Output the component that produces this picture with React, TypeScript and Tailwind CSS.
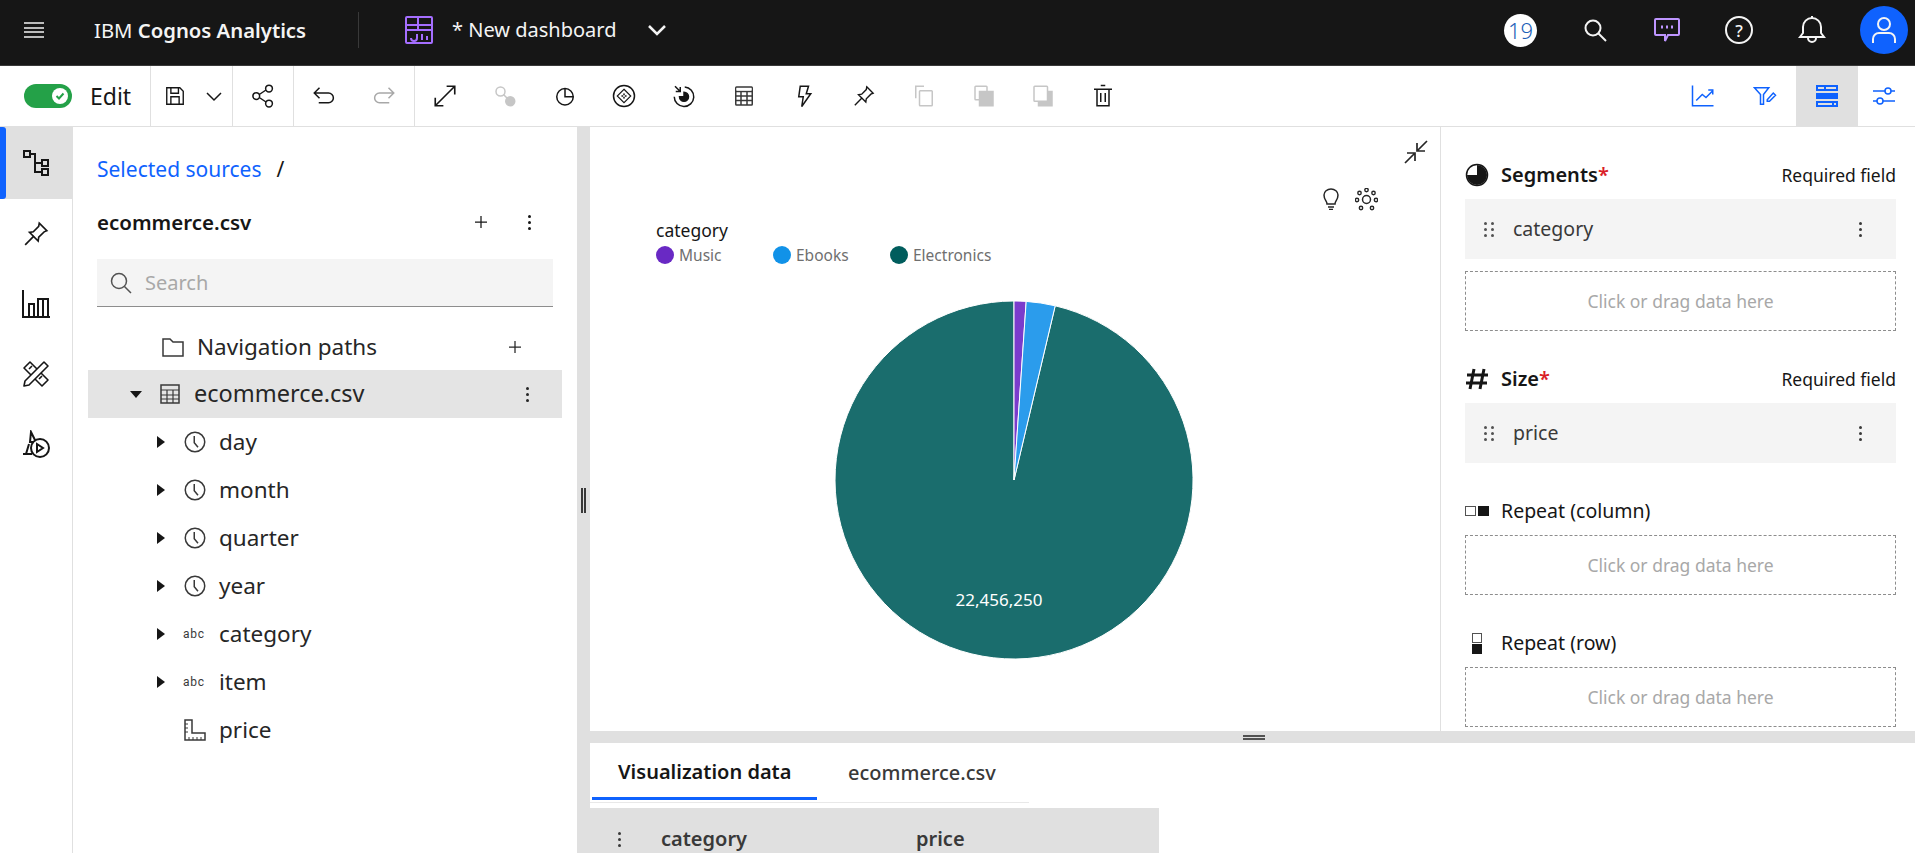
import React from 'react';

type IconProps = { size?: number; className?: string; children?: React.ReactNode; box?: number };

const Ico: React.FC<IconProps> = ({ size = 24, className = '', children, box = 32 }) => (
    <svg
        width={size}
        height={size}
        viewBox={`0 0 ${box} ${box}`}
        fill="none"
        stroke="currentColor"
        strokeWidth={2}
        className={`shrink-0 ${className}`}
    >
        {children}
    </svg>
);

const Dots: React.FC<{ className?: string }> = ({ className = '' }) => (
    <span className={`flex flex-col gap-[3px] w-[3px] ${className}`}>
        <i className="block w-[3px] h-[3px] rounded-full bg-current" />
        <i className="block w-[3px] h-[3px] rounded-full bg-current" />
        <i className="block w-[3px] h-[3px] rounded-full bg-current" />
    </span>
);

const Plus = () => (
    <Ico size={16}>
        <path d="M16 4v24M4 16h24" strokeWidth={2.5} />
    </Ico>
);

const Grip = () => (
    <span className="grid grid-cols-2 gap-x-[4px] gap-y-[3px] w-[10px]">
        {[0, 1, 2, 3, 4, 5].map((i) => (
            <i key={i} className="block w-[3px] h-[3px] bg-[#525252] rounded-full" />
        ))}
    </span>
);

const Clock = () => (
    <Ico size={24} className="text-[#393939]">
        <circle cx="16" cy="16" r="13" />
        <path d="M15 8v9l5 6" />
    </Ico>
);

const Abc = () => (
    <span className="w-[24px] text-[12px] leading-none text-[#393939] font-['Roboto'] tracking-[0.8px]">abc</span>
);

const Ruler = () => (
    <Ico size={24} className="text-[#393939]" box={24}>
        <path d="M2 2h7v13h13v7H2z" strokeWidth={1.5} />
        <path d="M2 6h3M2 10h3M2 14h3M6 22v-3M10 22v-3M14 22v-3M18 22v-3" strokeWidth={1} />
    </Ico>
);

const Pin: React.FC<{ size?: number }> = ({ size = 22 }) => (
    <Ico size={size} box={24}>
        <path d="M15 2l7 7-2.5 1-5 5 -.5 3.5L6 10.500l3.500-.5 5-5z" strokeWidth={1.5} />
        <path d="M10 14l-8 8" strokeWidth={1.5} />
    </Ico>
);

const toolbarIcons: React.ReactNode[] = [
    <Ico key="expand" size={26}>
        <path d="M4 28L28 4M18 4h10v10M14 28H4V18" />
    </Ico>,
    <Ico key="node" size={24} className="text-[#c6c6c6]">
        <circle cx="10" cy="10" r="6" />
        <path d="M14 14l6 6" />
        <circle cx="23" cy="23" r="6" fill="currentColor" />
    </Ico>,
    <Ico key="pie" size={24}>
        <circle cx="16" cy="17" r="11" />
        <path d="M16 6v11h11" />
    </Ico>,
    <Ico key="insight" size={24}>
        <circle cx="16" cy="16" r="14" />
        <path d="M16 7l9 9-9 9-9-9z" strokeWidth={1.5} />
        <path d="M16 12.500l1 2.500 2.500 1-2.500 1-1 2.500-1-2.500-2.500-1 2.500-1z" strokeWidth={1} />
    </Ico>,
    <Ico key="target" size={24}>
        <path d="M17 4a13 13 0 1 1-14 13" />
        <path d="M16 11a6 6 0 1 1-6 6h6z" fill="currentColor" />
        <path d="M4 3l7 7M11 4v6H5" />
    </Ico>,
    <Ico key="table" size={24} className="text-[#393939]">
        <rect x="5" y="4" width="22" height="24" rx="1" />
        <path d="M5 10h22M5 16h22M5 22h22M12 10v18M20 10v18" />
        <path d="M6 7h20" strokeWidth={3} stroke="#fff" />
    </Ico>,
    <Ico key="bolt" size={24}>
        <path d="M11 3h11l-3 10h6L13 30l2-13H9z" />
    </Ico>,
    <Pin key="pin" size={22} />,
    <Ico key="copy1" size={24} className="text-[#c6c6c6]">
        <path d="M5 19V3h11" />
        <rect x="10" y="9" width="17" height="20" rx="1" />
    </Ico>,
    <Ico key="copy2" size={24} className="text-[#c6c6c6]">
        <rect x="4" y="3" width="16" height="18" rx="1" />
        <rect x="10" y="10" width="18" height="19" fill="currentColor" />
    </Ico>,
    <Ico key="copy3" size={24} className="text-[#c6c6c6]">
        <rect x="10" y="10" width="18" height="19" fill="currentColor" />
        <rect x="4" y="3" width="18" height="20" fill="#fff" rx="1" />
    </Ico>,
    <Ico key="trash" size={24}>
        <path d="M4 7h24M13 2h6M8 7v22h16V7M13 12v12M19 12v12" />
    </Ico>,
];

const TreeRow: React.FC<{ label: string; icon: React.ReactNode; caret?: boolean }> = ({ label, icon, caret = true }) => (
    <div className="h-[48px] flex items-center pl-[84px] text-[22.5px]">
        <span className="w-[26px]">
            {caret && <i className="block w-0 h-0 border-y-[6px] border-y-transparent border-l-[8px] border-l-[#161616]" />}
        </span>
        <span className="w-[36px] flex">{icon}</span>
        <span>{label}</span>
    </div>
);

const DropZone = () => (
    <div className="h-[60px] border border-dashed border-[#8d8d8d] flex items-center justify-center text-[17.5px] text-[#a8a8a8]">
        Click or drag data here
    </div>
);

const FieldPill: React.FC<{ label: string }> = ({ label }) => (
    <div className="h-[60px] bg-[#f4f4f4] flex items-center pl-[19px] pr-[34px] text-[#393939]">
        <Grip />
        <span className="ml-[19px] flex-1 text-[19.5px]">{label}</span>
        <Dots />
    </div>
);

const App: React.FC = () => {
    return (
        <div className="w-[1915px] h-[853px] overflow-hidden flex flex-col bg-white text-[20px] text-[#161616] font-['Noto_Sans','Liberation_Sans',sans-serif]">
            {/* top bar */}
            <header className="h-[66px] shrink-0 bg-[#161616] border-b border-[#393939] flex items-center pb-[5px] text-[#f4f4f4]">
                <Ico size={20} className="ml-[24px]" box={20}>
                    <path d="M0 3h20M0 8h20M0 12h20M0 17h20" strokeWidth={1.5} />
                </Ico>
                <span className="ml-[50px] w-[264px] text-[20.3px]">
                    IBM <b className="font-semibold">Cognos Analytics</b>
                </span>
                <span className="w-px h-[36px] bg-[#393939]" />
                <Ico size={28} className="ml-[46px] text-[#a56eff]" box={28}>
                    <rect x="1" y="1" width="26" height="26" rx="1" />
                    <path d="M1 9h26M1 14h26M13 1v13" />
                    <path d="M12 18v4a3 3 0 0 1-6 0M17 18v6M22 20v4" />
                </Ico>
                <span className="ml-[19px]">* New dashboard</span>
                <Ico size={20} className="ml-[31px]" box={20}>
                    <path d="M2 6l8 8 8-8" strokeWidth={2.5} />
                </Ico>
                <span className="ml-auto w-[33px] h-[33px] rounded-full bg-white text-[#1c5fb8] flex items-center justify-center text-[22px] font-light">
                    19
                </span>
                <Ico size={24} className="ml-[46px]" box={24}>
                    <circle cx="10" cy="10" r="7.500" />
                    <path d="M15.500 15.500L23 23" />
                </Ico>
                <Ico size={28} className="ml-[46px] text-[#be95ff]" box={28}>
                    <path d="M3 3h22a1 1 0 0 1 1 1v14a1 1 0 0 1-1 1H15l-3 6v-6H3a1 1 0 0 1-1-1V4a1 1 0 0 1 1-1z" />
                    <path d="M8 11h2M13 11h2M18 11h2" strokeWidth={3} />
                </Ico>
                <span className="ml-[44px] w-[28px] h-[28px] rounded-full border-2 border-[#f4f4f4] flex items-center justify-center text-[17px] font-medium leading-none">
                    ?
                </span>
                <Ico size={28} className="ml-[45px]" box={28}>
                    <path d="M2 21l3-4v-6a9 9 0 0 1 18 0v6l3 4z" />
                    <path d="M14 2V0M10 22a4 4 0 0 0 8 0" />
                </Ico>
                <span className="ml-[34px] mr-[7px] w-[48px] h-[48px] rounded-full bg-[#0f62fe] flex items-center justify-center">
                    <Ico size={28} box={28}>
                        <circle cx="14" cy="8" r="6" />
                        <path d="M3 27v-4a6 6 0 0 1 6-6h10a6 6 0 0 1 6 6v4" />
                    </Ico>
                </span>
            </header>

            {/* toolbar */}
            <div className="h-[61px] shrink-0 border-b border-[#e0e0e0] flex items-stretch">
                <div className="w-[151px] border-r border-[#e0e0e0] flex items-center pl-[24px]">
                    <span className="w-[48px] h-[24px] rounded-full bg-[#24a148] flex items-center justify-end pr-[4px]">
                        <span className="w-[16px] h-[16px] rounded-full bg-white flex items-center justify-center text-[#24a148]">
                            <Ico size={12} box={12}>
                                <path d="M2.500 6l2.500 2.500 4.500-5" strokeWidth={2} />
                            </Ico>
                        </span>
                    </span>
                    <span className="ml-[18px] text-[23px]">Edit</span>
                </div>
                <div className="w-[82px] border-r border-[#e0e0e0] flex items-center pl-[13px]">
                    <Ico size={22}>
                        <path d="M4 4h19l5 5v19H4z" />
                        <path d="M10 4v8h11V4M10 28V17h12v11" />
                    </Ico>
                    <Ico size={16} className="ml-[20px]" box={16}>
                        <path d="M1 5l7 7 7-7" strokeWidth={1.5} />
                    </Ico>
                </div>
                <div className="w-[61px] border-r border-[#e0e0e0] flex items-center justify-center">
                    <Ico size={24}>
                        <circle cx="7" cy="16" r="4.500" />
                        <circle cx="24" cy="6" r="4.500" />
                        <circle cx="24" cy="26" r="4.500" />
                        <path d="M11 14l9-6M11 18l9 6" />
                    </Ico>
                </div>
                <div className="w-[121px] border-r border-[#e0e0e0] flex items-center justify-center gap-[36px]">
                    <Ico size={24}>
                        <path d="M10 5L3 12l7 7M3 12h19a6 6 0 0 1 0 13H9" />
                    </Ico>
                    <Ico size={24} className="text-[#a8a8a8]">
                        <path d="M22 5l7 7-7 7M29 12H10a6 6 0 0 0 0 13h13" />
                    </Ico>
                </div>
                <div className="flex items-center">
                    {toolbarIcons.map((icon, i) => (
                        <span key={i} className="w-[59.850px] flex justify-center">
                            {icon}
                        </span>
                    ))}
                </div>
                <div className="ml-auto flex items-stretch text-[#0f62fe]">
                    <span className="w-[62px] flex items-center justify-center">
                        <Ico size={24}>
                            <path d="M2 2v27h28M7 22l8-8 5 4 9-9M23 8h6v6" />
                        </Ico>
                    </span>
                    <span className="w-[62px] flex items-center justify-center">
                        <Ico size={24}>
                            <path d="M2 5h19l-7 9v13h-4V14zM19 21l8-9 3 3-8 8h-3z" />
                        </Ico>
                    </span>
                    <span className="w-[62px] bg-[#e0e0e0] flex items-center justify-center">
                        <svg width="24" height="24" viewBox="0 0 24 24" fill="currentColor">
                            <path d="M1 1h22v6H1zM1 9h22v6H1zM1 17h22v6H1z" />
                            <path d="M3 3h6v2H3zM11 3h10v2H11zM3 19h14v2H3zM19 19h2v2h-2z" fill="#e0e0e0" />
                        </svg>
                    </span>
                    <span className="w-[57px] pr-[5px] flex items-center justify-center">
                        <Ico size={24} box={24}>
                            <path d="M1 7h12M19 7h4M1 17h4M11 17h12" strokeWidth={1.500} />
                            <circle cx="16" cy="7" r="3" strokeWidth={1.500} />
                            <circle cx="8" cy="17" r="3" strokeWidth={1.500} />
                        </Ico>
                    </span>
                </div>
            </div>

            <div className="flex-1 flex min-h-0">
                {/* rail */}
                <nav className="w-[73px] shrink-0 border-r border-[#e0e0e0] flex flex-col text-[#161616]">
                    <div className="h-[72px] bg-[#e0e0e0] relative flex items-center justify-center">
                        <span className="absolute left-0 top-0 bottom-0 w-[6px] rounded-r-[3px] bg-[#0f62fe]" />
                        <Ico size={28} box={28}>
                            <rect x="2" y="2" width="6" height="6" />
                            <rect x="20" y="11" width="6" height="6" />
                            <rect x="20" y="20" width="6" height="6" />
                            <path d="M8 5h5v18h7M13 14h7" />
                        </Ico>
                    </div>
                    <div className="h-[70px] flex items-center justify-center">
                        <Pin size={26} />
                    </div>
                    <div className="h-[70px] flex items-center justify-center">
                        <Ico size={28} box={28}>
                            <path d="M1 0v27h27M7 27V14h5v13M16 27V9h5v18" />
                            <path d="M21 9h5v18" />
                        </Ico>
                    </div>
                    <div className="h-[70px] flex items-center justify-center">
                        <Ico size={28} box={28}>
                            <path d="M8 2L2 8l18 18 6-6zM7 9l3-3M12 14l3-3M17 19l3-3" strokeLinejoin="round" strokeWidth={1.6} />
                            <path d="M22 2l4 4L7 25l-5 1 1-5z" fill="#fff" strokeLinejoin="round" strokeWidth={1.6} />
                        </Ico>
                    </div>
                    <div className="h-[70px] flex items-center justify-center">
                        <Ico size={28} box={28}>
                            <path d="M9 2l5 10h-6zM1 24h9M7 14l-3 10" />
                            <circle cx="18" cy="18" r="9" fill="#fff" />
                            <path d="M15 14l6 4-6 4z" />
                        </Ico>
                    </div>
                </nav>

                {/* data panel */}
                <aside className="w-[504px] shrink-0 flex flex-col">
                    <div className="h-[86px] pl-[24px] flex items-center text-[21px]">
                        <span className="text-[#0f62fe]">Selected sources</span>
                        <span className="ml-[15px]">/</span>
                    </div>
                    <div className="h-[18px] pl-[24px] flex items-center font-semibold text-[20.5px]">
                        <span>ecommerce.csv</span>
                        <span className="ml-auto mr-[39px] flex">
                            <Plus />
                        </span>
                        <Dots className="mr-[46px]" />
                    </div>
                    <div className="mt-[28px] ml-[24px] w-[456px] h-[48px] bg-[#f4f4f4] border-b border-[#8d8d8d] flex items-center pl-[12px] text-[#a8a8a8]">
                        <Ico size={24} className="text-[#525252]" box={24}>
                            <circle cx="10" cy="10" r="7.500" strokeWidth={1.500} />
                            <path d="M15.500 15.500L22 22" strokeWidth={1.500} />
                        </Ico>
                        <span className="ml-[12px]">Search</span>
                    </div>
                    <div className="h-[16px]" />
                    <div className="h-[47px] flex items-center pl-[88px] text-[#262626] text-[22.5px]">
                        <Ico size={24} box={24} className="text-[#393939]">
                            <path d="M2 4h7l3 3h10v14H2z" strokeWidth={1.500} />
                        </Ico>
                        <span className="ml-[12px]">Navigation paths</span>
                        <span className="ml-auto mr-[54px] flex">
                            <Plus />
                        </span>
                    </div>
                    <div className="ml-[15px] w-[474px] h-[48px] bg-[#e4e4e4] flex items-center pl-[42px] pr-[33px] text-[#262626] text-[23.5px]">
                        <i className="w-0 h-0 border-x-[6px] border-x-transparent border-t-[7px] border-t-[#161616]" />
                        <Ico size={24} className="ml-[16px] text-[#393939]" box={24}>
                            <rect x="3" y="3" width="18" height="18" strokeWidth={1.500} />
                            <path d="M3 8h18M3 13h18M3 17h18M9 8v13M15 8v13" strokeWidth={1.200} />
                        </Ico>
                        <span className="ml-[12px] flex-1">ecommerce.csv</span>
                        <Dots />
                    </div>
                    <div className="text-[#262626]">
                        <TreeRow label="day" icon={<Clock />} />
                        <TreeRow label="month" icon={<Clock />} />
                        <TreeRow label="quarter" icon={<Clock />} />
                        <TreeRow label="year" icon={<Clock />} />
                        <TreeRow label="category" icon={<Abc />} />
                        <TreeRow label="item" icon={<Abc />} />
                        <TreeRow label="price" icon={<Ruler />} caret={false} />
                    </div>
                </aside>

                {/* vertical splitter */}
                <div className="w-[13px] shrink-0 bg-[#e0e0e0] pt-[361px] flex justify-center gap-[1px]">
                    <i className="block w-[2px] h-[25px] bg-[#393939]" />
                    <i className="block w-[2px] h-[25px] bg-[#393939]" />
                </div>

                <div className="flex-1 flex flex-col min-w-0">
                    <div className="h-[604px] shrink-0 flex">
                        {/* chart canvas */}
                        <section className="w-[851px] shrink-0 border-r border-[#e0e0e0] pt-[13px] overflow-hidden">
                            <div className="flex justify-end pr-[12px] text-[#262626]">
                                <Ico size={24} box={24}>
                                    <path d="M1 23L10 14M3 13h8v8M23 1l-9 9M13 3v8h8" strokeWidth={1.700} />
                                </Ico>
                            </div>
                            <div className="mt-[24px] flex justify-end pr-[62px] gap-[13px] text-[#262626]">
                                <Ico size={22} box={22}>
                                    <path d="M7 16c0-3-3-4-3-9a7 6 0 0 1 14 0c0 5-3 6-3 9z" strokeWidth={1.500} />
                                    <path d="M8 19h6M9 21.500h4" strokeWidth={1.500} />
                                </Ico>
                                <Ico size={23} box={23}>
                                    <circle cx="11.500" cy="11.500" r="4" strokeWidth={1.500} />
                                    {[[11.500, 2], [4.500, 5], [18.500, 5], [2, 12], [21, 12], [6, 20], [17, 20]].map(([cx, cy]) => (
                                        <circle key={`${cx}-${cy}`} cx={cx} cy={cy} r="1.700" strokeWidth={1.400} />
                                    ))}
                                </Ico>
                            </div>
                            <div className="mt-[8px] ml-[66px] text-[17.500px] leading-[22px]">category</div>
                            <div className="mt-[3px] ml-[66px] flex text-[15.500px] leading-[22px] text-[#6f6f6f]">
                                <span className="w-[117px] flex items-center gap-[5px]">
                                    <i className="block w-[18px] h-[18px] rounded-full bg-[#6929c4]" />
                                    Music
                                </span>
                                <span className="w-[117px] flex items-center gap-[5px]">
                                    <i className="block w-[18px] h-[18px] rounded-full bg-[#1192e8]" />
                                    Ebooks
                                </span>
                                <span className="flex items-center gap-[5px]">
                                    <i className="block w-[18px] h-[18px] rounded-full bg-[#005d5d]" />
                                    Electronics
                                </span>
                            </div>
                            <svg width="360" height="360" viewBox="0 0 360 360" className="mt-[34px] ml-[244px]">
                                <path d="M180 180L221.200 5.800A179 179 0 1 1 180 1Z" fill="#1a6d6d" stroke="#fff" />
                                <path d="M180 180L180 1A179 179 0 0 1 192.200 1.400Z" fill="#7a3ccc" stroke="#fff" />
                                <path d="M180 180L192.200 1.400A179 179 0 0 1 221.200 5.800Z" fill="#2b9cec" stroke="#fff" />
                                <text x="165" y="306" textAnchor="middle" fill="#fff" fontSize="17">
                                    22,456,250
                                </text>
                            </svg>
                        </section>

                        {/* slots panel */}
                        <section className="flex-1 flex flex-col h-[601px] overflow-hidden pl-[24px] pr-[19px] pt-[36px]">
                            <div className="h-[24px] flex items-center">
                                <svg width="24" height="24" viewBox="0 0 24 24" className="shrink-0">
                                    <circle cx="12" cy="12" r="10.500" fill="#fff" stroke="#161616" strokeWidth="1.500" />
                                    <path d="M12 2a10 10 0 1 1-10 10h10z" fill="#161616" />
                                </svg>
                                <b className="ml-[12px] font-semibold">
                                    Segments<span className="text-[#da1e28]">*</span>
                                </b>
                                <span className="ml-auto text-[17.500px]">Required field</span>
                            </div>
                            <div className="mt-[12px]">
                                <FieldPill label="category" />
                            </div>
                            <div className="mt-[12px]">
                                <DropZone />
                            </div>
                            <div className="mt-[36px] h-[24px] flex items-center">
                                <Ico size={24} box={24}>
                                    <path d="M9 2L5 22M19 2l-4 20M2 8h21M1 16h21" strokeWidth={3} />
                                </Ico>
                                <b className="ml-[12px] font-semibold">
                                    Size<span className="text-[#da1e28]">*</span>
                                </b>
                                <span className="ml-auto text-[17.500px]">Required field</span>
                            </div>
                            <div className="mt-[12px]">
                                <FieldPill label="price" />
                            </div>
                            <div className="mt-[36px] h-[24px] flex items-center">
                                <span className="w-[24px] flex items-center gap-[2px]">
                                    <i className="block w-[11px] h-[10px] border border-[#525252]" />
                                    <i className="block w-[11px] h-[10px] bg-[#161616]" />
                                </span>
                                <span className="ml-[12px] text-[19.500px]">Repeat (column)</span>
                            </div>
                            <div className="mt-[12px]">
                                <DropZone />
                            </div>
                            <div className="mt-[36px] h-[24px] flex items-center">
                                <span className="w-[24px] flex flex-col items-center gap-[1px]">
                                    <i className="block w-[10px] h-[10px] border border-[#525252]" />
                                    <i className="block w-[10px] h-[10px] bg-[#161616]" />
                                </span>
                                <span className="ml-[12px] text-[19.500px]">Repeat (row)</span>
                            </div>
                            <div className="mt-[12px]">
                                <DropZone />
                            </div>
                        </section>
                    </div>

                    {/* horizontal splitter */}
                    <div className="h-[12px] shrink-0 bg-[#e0e0e0] flex flex-col items-center justify-center gap-[1px] pl-[2px]">
                        <i className="block w-[22px] h-[2px] bg-[#525252]" />
                        <i className="block w-[22px] h-[2px] bg-[#525252]" />
                    </div>

                    {/* data tabs */}
                    <div className="w-[439px] h-[60px] shrink-0 border-b border-[#e8e8e8] flex pl-[2px]">
                        <div className="w-[225px] h-[57px] border-b-[3px] border-[#0f62fe] pl-[26px] pt-[3px] flex items-center font-semibold">
                            Visualization data
                        </div>
                        <div className="h-[57px] pl-[31px] pt-[3px] flex items-center font-medium text-[#393939]">ecommerce.csv</div>
                    </div>
                    <div className="mt-[5px] -ml-[13px] w-[582px] h-[62px] shrink-0 bg-[#e0e0e0] flex items-center font-semibold text-[#393939]">
                        <Dots className="ml-[41px]" />
                        <span className="ml-[40px] w-[255px]">category</span>
                        <span>price</span>
                    </div>
                </div>
            </div>
        </div>
    );
};

export default App;
